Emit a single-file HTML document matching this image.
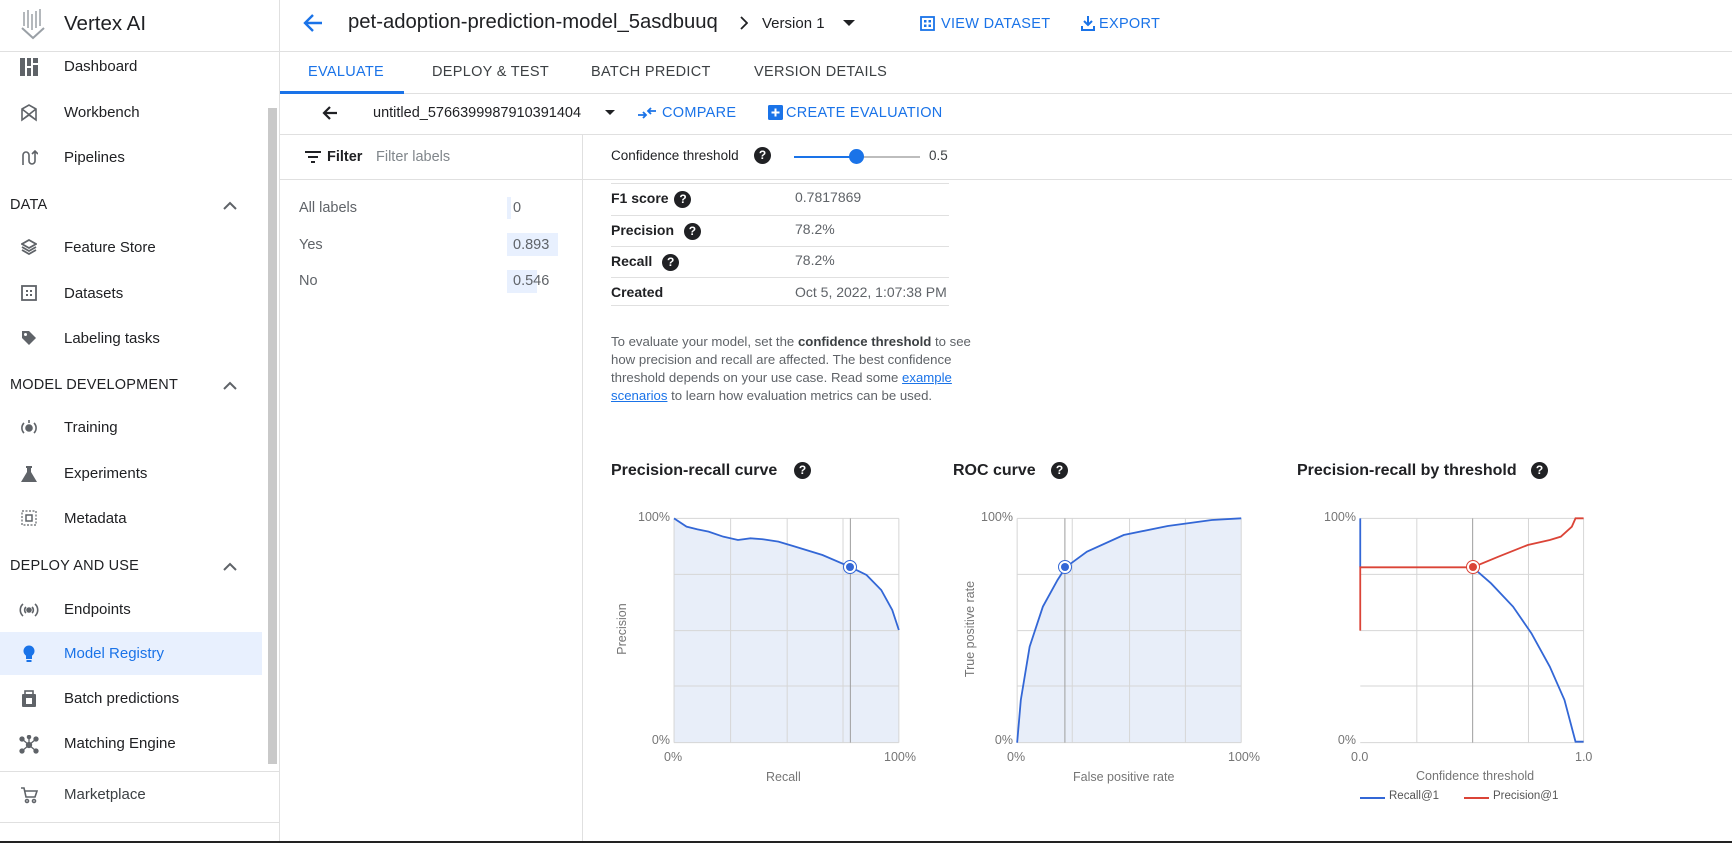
<!DOCTYPE html>
<html><head><meta charset="utf-8"><style>
*{margin:0;padding:0;box-sizing:border-box}
body{width:1732px;height:843px;overflow:hidden;background:#fff;font-family:"Liberation Sans",Arial,sans-serif;color:#202124;position:relative}
.a{position:absolute;white-space:nowrap}
.si{font-size:15px;color:#202124}
.sec{font-size:14.5px;color:#202124;letter-spacing:.2px}
.tab{font-size:14.5px;color:#3c4043;font-weight:500;letter-spacing:.3px}
.blue{color:#1a73e8}
.hl{position:absolute;height:1px;background:#e0e0e0}
.q{display:inline-block;width:17px;height:17px;border-radius:50%;background:#202124;color:#fff;font-size:12px;font-weight:bold;text-align:center;line-height:17px;vertical-align:middle}
.lbl{font-size:12.5px;color:#757575;font-family:"Liberation Sans Narrow","Liberation Sans",sans-serif}
.chev{position:absolute;width:14px;height:9px}
</style></head><body>
<!-- sidebar -->
<div class="a" style="left:279px;top:0;width:1px;height:843px;background:#e0e0e0"></div>
<svg class="a" style="left:20px;top:8px" width="26" height="32" viewBox="0 0 26 32"><g stroke="#9aa0a6" stroke-width="1.5"><line x1="4" y1="4" x2="4" y2="18"/><line x1="8" y1="2" x2="8" y2="20"/><line x1="12" y1="6" x2="12" y2="22"/><line x1="16" y1="3" x2="16" y2="20"/><line x1="20" y1="1" x2="20" y2="18"/></g><path d="M2 20 L13 30 L24 20" stroke="#9aa0a6" stroke-width="2" fill="none"/></svg>
<div class="a" style="left:64px;top:12px;font-size:20.5px;color:#202124">Vertex AI</div>
<div class="hl" style="left:0;top:51px;width:280px"></div>
<div class="a" style="left:0;top:632px;width:262px;height:43px;background:#e8f0fe"></div>
<div class="a" style="left:268px;top:108px;width:9px;height:656px;background:#c9c9c9"></div>
<div class="hl" style="left:0;top:771px;width:280px"></div>
<div class="hl" style="left:0;top:822px;width:280px"></div>

<svg class="a" style="left:20px;top:58px" width="18" height="18"><rect x="0" y="0" width="5" height="18" fill="#5f6368"/><rect x="7" y="0" width="4" height="8" fill="#5f6368"/><rect x="7" y="10" width="4" height="8" fill="#5f6368"/><rect x="13" y="0" width="5" height="5" fill="#5f6368"/><rect x="13" y="7" width="5" height="11" fill="#5f6368"/></svg>
<div class="a si" style="left:64px;top:58px">Dashboard</div>
<svg class="a" style="left:20px;top:104px" width="18" height="18" fill="none" stroke="#5f6368" stroke-width="1.6"><path d="M2 5 L9 1 L16 5 L16 16 L9 11 L2 16 Z M2 5 L16 16 M16 5 L2 16"/></svg>
<div class="a si" style="left:64px;top:104px">Workbench</div>
<svg class="a" style="left:20px;top:149px" width="18" height="18" fill="none" stroke="#5f6368" stroke-width="1.6"><path d="M3 16 V6 a3 3 0 0 1 6 0 V12 a3 3 0 0 0 6 0 V2 M12 5 L15 2 L18 5"/></svg>
<div class="a si" style="left:64px;top:149px">Pipelines</div>
<div class="a sec" style="left:10px;top:197px">DATA</div>
<svg class="chev" style="left:223px;top:201px" viewBox="0 0 14 9"><path d="M1 8 L7 2 L13 8" stroke="#5f6368" stroke-width="2" fill="none"/></svg>
<svg class="a" style="left:21px;top:239px" width="16" height="16"><path d="M8 1 L15 5 L8 9 L1 5Z M1 8 L8 12 L15 8 M1 11 L8 15 L15 11" fill="none" stroke="#5f6368" stroke-width="1.8"/></svg>
<div class="a si" style="left:64px;top:239px">Feature Store</div>
<svg class="a" style="left:21px;top:285px" width="16" height="16"><rect x="1" y="1" width="14" height="14" fill="none" stroke="#5f6368" stroke-width="1.8"/><rect x="5" y="5" width="2" height="2" fill="#5f6368"/><rect x="9" y="5" width="2" height="2" fill="#5f6368"/><rect x="5" y="9" width="2" height="2" fill="#5f6368"/><rect x="9" y="9" width="2" height="2" fill="#5f6368"/></svg>
<div class="a si" style="left:64px;top:285px">Datasets</div>
<svg class="a" style="left:21px;top:330px" width="16" height="16"><path d="M1 1 H8 L15 8 L8 15 L1 8Z" fill="#5f6368"/><circle cx="4.5" cy="4.5" r="1.5" fill="#fff"/></svg>
<div class="a si" style="left:64px;top:330px">Labeling tasks</div>
<div class="a sec" style="left:10px;top:377px">MODEL DEVELOPMENT</div>
<svg class="chev" style="left:223px;top:381px" viewBox="0 0 14 9"><path d="M1 8 L7 2 L13 8" stroke="#5f6368" stroke-width="2" fill="none"/></svg>
<svg class="a" style="left:20px;top:419px" width="18" height="18" fill="none" stroke="#5f6368" stroke-width="1.6"><path d="M4 4 A7 7 0 0 0 4 14 M14 4 A7 7 0 0 1 14 14"/><circle cx="9" cy="9" r="3" fill="#5f6368"/><path d="M9 1 V4"/></svg>
<div class="a si" style="left:64px;top:419px">Training</div>
<svg class="a" style="left:20px;top:465px" width="18" height="18"><path d="M6 1 H12 V3 H11 V7 L17 17 H1 L7 7 V3 H6Z" fill="#5f6368"/></svg>
<div class="a si" style="left:64px;top:465px">Experiments</div>
<svg class="a" style="left:21px;top:510px" width="16" height="16"><rect x="1" y="1" width="14" height="14" fill="none" stroke="#5f6368" stroke-width="1.2" stroke-dasharray="2 1.5"/><rect x="5" y="5" width="6" height="6" fill="none" stroke="#5f6368" stroke-width="1.5"/></svg>
<div class="a si" style="left:64px;top:510px">Metadata</div>
<div class="a sec" style="left:10px;top:558px">DEPLOY AND USE</div>
<svg class="chev" style="left:223px;top:562px" viewBox="0 0 14 9"><path d="M1 8 L7 2 L13 8" stroke="#5f6368" stroke-width="2" fill="none"/></svg>
<svg class="a" style="left:19px;top:601px" width="20" height="18" fill="none" stroke="#5f6368" stroke-width="1.6"><path d="M4 3 A8 8 0 0 0 4 15 M16 3 A8 8 0 0 1 16 15 M7 6 A4 4 0 0 0 7 12 M13 6 A4 4 0 0 1 13 12"/><circle cx="10" cy="9" r="2" fill="#5f6368"/></svg>
<div class="a si" style="left:64px;top:601px">Endpoints</div>
<svg class="a" style="left:22px;top:645px" width="14" height="18"><circle cx="7" cy="6" r="5.5" fill="#1a73e8"/><rect x="4" y="10" width="6" height="4" fill="#1a73e8"/><rect x="4.5" y="15" width="5" height="2" fill="#1a73e8"/></svg>
<div class="a si blue" style="left:64px;top:645px">Model Registry</div>
<svg class="a" style="left:20px;top:690px" width="18" height="18"><rect x="2" y="4" width="14" height="13" rx="1" fill="#5f6368"/><rect x="5" y="1" width="8" height="5" fill="none" stroke="#5f6368" stroke-width="1.6"/><rect x="6" y="8" width="6" height="6" fill="#fff"/></svg>
<div class="a si" style="left:64px;top:690px">Batch predictions</div>
<svg class="a" style="left:19px;top:735px" width="20" height="20" fill="#5f6368" stroke="#5f6368" stroke-width="1.3"><circle cx="10" cy="10" r="2.5"/><circle cx="3" cy="4" r="2"/><circle cx="17" cy="4" r="2"/><circle cx="3" cy="16" r="2"/><circle cx="17" cy="16" r="2"/><circle cx="10" cy="2" r="1.6"/><path d="M10 10 L3 4 M10 10 L17 4 M10 10 L3 16 M10 10 L17 16 M10 10 V2"/></svg>
<div class="a si" style="left:64px;top:735px">Matching Engine</div>
<svg class="a" style="left:20px;top:786px" width="18" height="18" fill="none" stroke="#5f6368" stroke-width="1.6"><path d="M1 2 H4 L6 11 H15 L17 5 H5"/><circle cx="7" cy="15" r="1.5"/><circle cx="14" cy="15" r="1.5"/></svg>
<div class="a si" style="left:64px;top:786px;color:#3c4043">Marketplace</div>

<!-- header -->
<svg class="a" style="left:302px;top:12px" width="22" height="22"><path d="M20 11 H4 M11 3 L3 11 L11 19" stroke="#1a73e8" stroke-width="2.4" fill="none"/></svg>
<div class="a" style="left:348px;top:11px;font-size:20.3px;color:#202124">pet-adoption-prediction-model_5asdbuuq</div>
<svg class="a" style="left:739px;top:16px" width="9" height="14"><path d="M2 1 L8 7 L2 13" stroke="#202124" stroke-width="1.8" fill="none"/></svg>
<div class="a" style="left:762px;top:15px;font-size:15px">Version 1</div>
<div class="a" style="left:843px;top:20px;width:0;height:0;border-left:6px solid transparent;border-right:6px solid transparent;border-top:6px solid #202124"></div>
<svg class="a" style="left:920px;top:16px" width="15" height="15"><rect x="1" y="1" width="13" height="13" fill="none" stroke="#1a73e8" stroke-width="1.8"/><rect x="4" y="4" width="2.5" height="2.5" fill="#1a73e8"/><rect x="8.5" y="4" width="2.5" height="2.5" fill="#1a73e8"/><rect x="4" y="8.5" width="2.5" height="2.5" fill="#1a73e8"/><rect x="8.5" y="8.5" width="2.5" height="2.5" fill="#1a73e8"/></svg>
<div class="a tab blue" style="left:941px;top:16px">VIEW DATASET</div>
<svg class="a" style="left:1081px;top:15px" width="14" height="16"><path d="M7 1 V10 M3 6 L7 10 L11 6 M1 11 V15 H13 V11" stroke="#1a73e8" stroke-width="2" fill="none"/></svg>
<div class="a tab blue" style="left:1099px;top:16px">EXPORT</div>
<div class="hl" style="left:280px;top:51px;width:1452px"></div>
<div class="a tab blue" style="left:308px;top:64px">EVALUATE</div>
<div class="a tab" style="left:432px;top:64px">DEPLOY &amp; TEST</div>
<div class="a tab" style="left:591px;top:64px">BATCH PREDICT</div>
<div class="a tab" style="left:754px;top:64px">VERSION DETAILS</div>
<div class="hl" style="left:280px;top:93px;width:1452px"></div>
<div class="a" style="left:280px;top:91px;width:124px;height:3px;background:#1a73e8"></div>
<svg class="a" style="left:321px;top:104px" width="18" height="18"><path d="M16 9 H3 M9 3 L3 9 L9 15" stroke="#202124" stroke-width="2.2" fill="none"/></svg>
<div class="a" style="left:373px;top:105px;font-size:14.5px">untitled_5766399987910391404</div>
<div class="a" style="left:605px;top:110px;border-left:5px solid transparent;border-right:5px solid transparent;border-top:5px solid #202124"></div>
<svg class="a" style="left:637px;top:105px" width="20" height="16"><path d="M1 10 H9 M6 7 L9 10 L6 13 M19 6 H11 M14 3 L11 6 L14 9" stroke="#1a73e8" stroke-width="1.8" fill="none"/></svg>
<div class="a tab blue" style="left:662px;top:105px">COMPARE</div>
<svg class="a" style="left:768px;top:105px" width="15" height="15"><rect width="15" height="15" rx="1.5" fill="#1a73e8"/><path d="M7.5 3.5 V11.5 M3.5 7.5 H11.5" stroke="#fff" stroke-width="2"/></svg>
<div class="a tab blue" style="left:786px;top:105px">CREATE EVALUATION</div>
<div class="hl" style="left:280px;top:134px;width:1452px"></div>

<!-- left panel -->
<div class="a" style="left:582px;top:134px;width:1px;height:709px;background:#e0e0e0"></div>
<svg class="a" style="left:305px;top:151px" width="16" height="12"><path d="M0 1 H16 M3 6 H13 M6 11 H10" stroke="#202124" stroke-width="2"/></svg>
<div class="a" style="left:327px;top:149px;font-size:14.5px;font-weight:bold">Filter</div>
<div class="a" style="left:376px;top:149px;font-size:14.5px;color:#80868b">Filter labels</div>
<div class="hl" style="left:280px;top:179px;width:1452px"></div>
<div class="a" style="left:299px;top:200px;font-size:14.5px;color:#5f6368">All labels</div>
<div class="a" style="left:299px;top:237px;font-size:14.5px;color:#5f6368">Yes</div>
<div class="a" style="left:299px;top:273px;font-size:14.5px;color:#5f6368">No</div>
<div class="a" style="left:507px;top:197px;width:4px;height:22px;background:#e8f0fe"></div>
<div class="a" style="left:507px;top:233px;width:51px;height:23px;background:#e8f0fe"></div>
<div class="a" style="left:507px;top:270px;width:30px;height:23px;background:#e8f0fe"></div>
<div class="a" style="left:513px;top:200px;font-size:14.5px;color:#5f6368">0</div>
<div class="a" style="left:513px;top:237px;font-size:14.5px;color:#5f6368">0.893</div>
<div class="a" style="left:513px;top:273px;font-size:14.5px;color:#5f6368">0.546</div>

<!-- right -->
<div class="a" style="left:611px;top:148px;font-size:13.5px;font-weight:500">Confidence threshold</div>
<div class="a" style="left:754px;top:147px"><span class="q">?</span></div>
<div class="a" style="left:794px;top:156px;width:62px;height:2px;background:#1a73e8"></div>
<div class="a" style="left:856px;top:156px;width:64px;height:2px;background:#bdbdbd"></div>
<div class="a" style="left:849px;top:149px;width:15px;height:15px;border-radius:50%;background:#1a73e8"></div>
<div class="a" style="left:929px;top:148px;font-size:13.5px;color:#3c4043">0.5</div>

<div class="hl" style="left:611px;top:183px;width:338px"></div>
<div class="hl" style="left:611px;top:215px;width:338px"></div>
<div class="hl" style="left:611px;top:246px;width:338px"></div>
<div class="hl" style="left:611px;top:277px;width:338px"></div>
<div class="hl" style="left:611px;top:305px;width:338px"></div>
<div class="a" style="left:611px;top:190px;font-size:14px;font-weight:bold">F1 score <span class="q" style="margin-left:2px">?</span></div>
<div class="a" style="left:611px;top:222px;font-size:14px;font-weight:bold">Precision <span class="q" style="margin-left:6px">?</span></div>
<div class="a" style="left:611px;top:253px;font-size:14px;font-weight:bold">Recall <span class="q" style="margin-left:6px">?</span></div>
<div class="a" style="left:611px;top:284px;font-size:14px;font-weight:bold">Created</div>
<div class="a" style="left:795px;top:189px;font-size:14px;color:#5f6368">0.7817869</div>
<div class="a" style="left:795px;top:221px;font-size:14px;color:#5f6368">78.2%</div>
<div class="a" style="left:795px;top:252px;font-size:14px;color:#5f6368">78.2%</div>
<div class="a" style="left:795px;top:284px;font-size:14px;color:#5f6368">Oct 5, 2022, 1:07:38 PM</div>
<div class="a" style="left:611px;top:333px;width:370px;white-space:normal;font-size:13.2px;line-height:18px;color:#5f6368">To evaluate your model, set the <b style="color:#3c4043">confidence threshold</b> to see how precision and recall are affected. The best confidence threshold depends on your use case. Read some <span style="color:#1a73e8;text-decoration:underline">example scenarios</span> to learn how evaluation metrics can be used.</div>

<!-- chart titles -->
<div class="a" style="left:611px;top:462px;font-size:16px;font-weight:bold">Precision-recall curve</div>
<div class="a" style="left:794px;top:462px"><span class="q">?</span></div>
<div class="a" style="left:953px;top:462px;font-size:16px;font-weight:bold">ROC curve</div>
<div class="a" style="left:1051px;top:462px"><span class="q">?</span></div>
<div class="a" style="left:1297px;top:462px;font-size:16px;font-weight:bold">Precision-recall by threshold</div>
<div class="a" style="left:1531px;top:462px"><span class="q">?</span></div>

<svg class="a" style="left:580px;top:440px" width="1152" height="403" viewBox="0 0 1568 1209" preserveAspectRatio="none">
<g fill="#e8eef9"><path d="M128 235 L145 260 L175 275 L215 300 L250 298 L290 318 L330 345 L367 380 L390 405 L410 450 L425 510 L434 570 L434 908 L128 908Z"/><path d="M595 908 L600 780 L612 620 L630 500 L650 420 L661 382 L690 335 L740 285 L800 258 L860 240 L900 235 L900 908Z"/></g>
<g stroke="#d6d6d6" stroke-width="1" fill="none">
<path d="M128 235 H434 M128 403 H434 M128 572 H434 M128 738 H434 M128 908 H434 M128 235 V908 M205 235 V908 M282 235 V908 M358 235 V908 M434 235 V908" vector-effect="non-scaling-stroke"/>
<path d="M595 235 H900 M595 403 H900 M595 572 H900 M595 738 H900 M595 908 H900 M595 235 V908 M670 235 V908 M748 235 V908 M824 235 V908 M900 235 V908" vector-effect="non-scaling-stroke"/>
<path d="M1062 235 H1366 M1062 403 H1366 M1062 572 H1366 M1062 738 H1366 M1062 908 H1366 M1139 235 V908 M1291 235 V908 M1366 235 V908" vector-effect="non-scaling-stroke"/>
</g>
<g stroke="#9e9e9e" stroke-width="1" fill="none"><path d="M368 235 V908 M660 235 V908 M1215 235 V908" vector-effect="non-scaling-stroke"/></g>
<g stroke="#3367d6" stroke-width="1.8" fill="none">
<path d="M128 235 L145 260 L160 268 L175 275 L195 290 L215 300 L232 295 L250 298 L270 305 L290 318 L330 345 L367 380 L390 405 L410 450 L425 510 L434 570" vector-effect="non-scaling-stroke"/>
<path d="M595 908 L600 780 L612 620 L630 500 L650 420 L661 382 L690 335 L740 285 L800 258 L860 240 L900 235" vector-effect="non-scaling-stroke"/>
<path d="M1062 235 L1062 382 M1215 382 L1240 430 L1270 500 L1295 580 L1320 680 L1340 780 L1355 905 L1366 905" vector-effect="non-scaling-stroke"/>
</g>
<path d="M1062 572 L1062 382 L1215 382 L1250 350 L1290 315 L1320 300 L1335 290 L1350 260 L1355 235 L1366 235" stroke="#db4437" stroke-width="1.8" fill="none" vector-effect="non-scaling-stroke"/>
</svg>
<div class="a" style="left:843px;top:560px;width:14px;height:14px;border-radius:50%;border:1.5px solid #3367d6;background:#fff"></div>
<div class="a" style="left:846px;top:563px;width:8px;height:8px;border-radius:50%;background:#3367d6"></div>
<div class="a" style="left:1058px;top:560px;width:14px;height:14px;border-radius:50%;border:1.5px solid #3367d6;background:#fff"></div>
<div class="a" style="left:1061px;top:563px;width:8px;height:8px;border-radius:50%;background:#3367d6"></div>
<div class="a" style="left:1466px;top:560px;width:14px;height:14px;border-radius:50%;border:1.5px solid #db4437;background:#fff"></div>
<div class="a" style="left:1469px;top:563px;width:8px;height:8px;border-radius:50%;background:#db4437"></div>

<!-- axis labels -->
<div class="a lbl" style="left:630px;top:510px;width:40px;text-align:right">100%</div>
<div class="a lbl" style="left:630px;top:733px;width:40px;text-align:right">0%</div>
<div class="a lbl" style="left:664px;top:750px">0%</div>
<div class="a lbl" style="left:884px;top:750px">100%</div>
<div class="a lbl" style="left:766px;top:770px">Recall</div>
<div class="a lbl" style="left:592px;top:622px;transform:rotate(-90deg);width:60px;text-align:center">Precision</div>
<div class="a lbl" style="left:973px;top:510px;width:40px;text-align:right">100%</div>
<div class="a lbl" style="left:973px;top:733px;width:40px;text-align:right">0%</div>
<div class="a lbl" style="left:1007px;top:750px">0%</div>
<div class="a lbl" style="left:1228px;top:750px">100%</div>
<div class="a lbl" style="left:1073px;top:770px">False positive rate</div>
<div class="a lbl" style="left:910px;top:622px;transform:rotate(-90deg);width:120px;text-align:center">True positive rate</div>
<div class="a lbl" style="left:1316px;top:510px;width:40px;text-align:right">100%</div>
<div class="a lbl" style="left:1316px;top:733px;width:40px;text-align:right">0%</div>
<div class="a lbl" style="left:1351px;top:750px">0.0</div>
<div class="a lbl" style="left:1575px;top:750px">1.0</div>
<div class="a lbl" style="left:1416px;top:769px">Confidence threshold</div>
<div class="a" style="left:1360px;top:797px;width:25px;height:2px;background:#3367d6"></div>
<div class="a lbl" style="left:1389px;top:790px;font-size:11.5px;color:#555">Recall@1</div>
<div class="a" style="left:1464px;top:797px;width:25px;height:2px;background:#db4437"></div>
<div class="a lbl" style="left:1493px;top:790px;font-size:11.5px;color:#555">Precision@1</div>

<div class="a" style="left:0;top:841px;width:1732px;height:2px;background:#222"></div>
</body></html>
